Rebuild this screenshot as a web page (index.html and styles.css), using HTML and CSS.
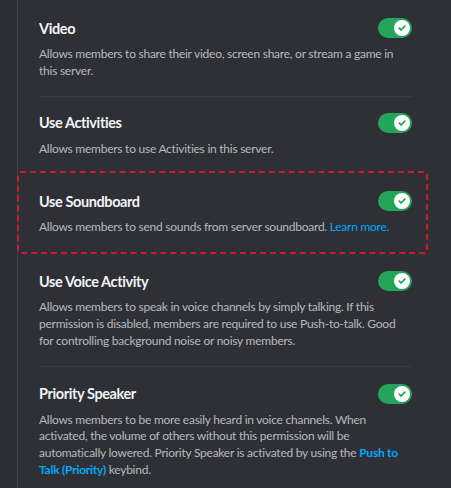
FILE: index.html
```html
<!DOCTYPE html>
<html>
<head>
<meta charset="utf-8">
<link rel="stylesheet" href="styles.css">
</head>
<body>
<div class="page">
  <div class="rail"></div>
  <div class="list">
    <div class="perm r1">
      <div class="head"><span class="title">Video</span><span class="toggle"><span class="knob"><svg viewBox="0 0 12 12"><path d="M3.3 6.2 L5.2 8 L8.8 4.2" /></svg></span></span></div>
      <p class="desc">Allows members to share their video, screen share, or stream a game in this server.</p>
    </div>
    <div class="perm r2">
      <div class="head"><span class="title">Use Activities</span><span class="toggle"><span class="knob"><svg viewBox="0 0 12 12"><path d="M3.3 6.2 L5.2 8 L8.8 4.2" /></svg></span></span></div>
      <p class="desc">Allows members to use Activities in this server.</p>
    </div>
    <div class="perm highlight">
      <div class="head"><span class="title">Use Soundboard</span><span class="toggle"><span class="knob"><svg viewBox="0 0 12 12"><path d="M3.3 6.2 L5.2 8 L8.8 4.2" /></svg></span></span></div>
      <p class="desc">Allows members to send sounds from server soundboard. <a class="link">Learn more.</a></p>
    </div>
    <div class="perm r4">
      <div class="head"><span class="title">Use Voice Activity</span><span class="toggle"><span class="knob"><svg viewBox="0 0 12 12"><path d="M3.3 6.2 L5.2 8 L8.8 4.2" /></svg></span></span></div>
      <p class="desc">Allows members to speak in voice channels by simply talking. If this permission is disabled, members are required to use Push-to-talk. Good for controlling background noise or noisy members.</p>
    </div>
    <div class="perm r5">
      <div class="head"><span class="title">Priority Speaker</span><span class="toggle"><span class="knob"><svg viewBox="0 0 12 12"><path d="M3.3 6.2 L5.2 8 L8.8 4.2" /></svg></span></span></div>
      <p class="desc">Allows members to be more easily heard in voice channels. When activated, the volume of others without this permission will be automatically lowered. Priority Speaker is activated by using the <a class="link strong">Push to</a> <a class="link strong">Talk (Priority)</a> keybind.</p>
    </div>
  </div>
</div>
</body>
</html>
```
FILE: styles.css
```css
html, body {
  margin: 0;
  padding: 0;
  background: #2e3035;
  width: 451px;
  height: 488px;
  overflow: hidden;
}
.page {
  display: flex;
  height: 488px;
  font-family: Lato, "Noto Sans", sans-serif;
}
.rail {
  width: 17px;
  flex: none;
  border-right: 1px solid #3f4147;
  background: #2d2f34;
}
.list {
  flex: 1;
  display: flex;
  flex-direction: column;
}
.perm {
  margin: 0 39px 0 21px;
}
.r1 {
  padding: 17px 0 16px;
  border-bottom: 1px solid #3a3c42;
}
.r2 {
  padding: 15px 0 14px;
}
.highlight {
  border: 2px dashed #cf1a2b;
  border-radius: 3px;
  margin: 0 23px 0 -1px;
  padding: 17px 14px 16px 20px;
}
.r4 {
  padding: 16px 0 16px;
  border-bottom: 1px solid #3a3c42;
}
.r5 {
  padding: 16px 0 0;
}
.head {
  display: flex;
  justify-content: space-between;
  align-items: center;
  height: 22px;
}
.title {
  color: #f2f3f5;
  font-size: 14.5px;
  font-weight: 700;
  letter-spacing: -0.4px;
}
.toggle {
  width: 34px;
  height: 20px;
  border-radius: 10px;
  background: #23a55a;
  position: relative;
  flex: none;
}
.knob {
  position: absolute;
  right: 2px;
  top: 2px;
  width: 16px;
  height: 16px;
  border-radius: 50%;
  background: #fff;
  display: flex;
  align-items: center;
  justify-content: center;
}
.knob svg {
  width: 12px;
  height: 12px;
}
.knob path {
  fill: none;
  stroke: #23a55a;
  stroke-width: 1.8;
  stroke-linecap: round;
  stroke-linejoin: round;
}
.desc {
  margin: 7px 0 0;
  color: #b5bac1;
  font-size: 12px;
  line-height: 16.8px;
  letter-spacing: -0.25px;
}
.link {
  color: #00a8fc;
}
.link.strong {
  font-weight: 700;
}
```
